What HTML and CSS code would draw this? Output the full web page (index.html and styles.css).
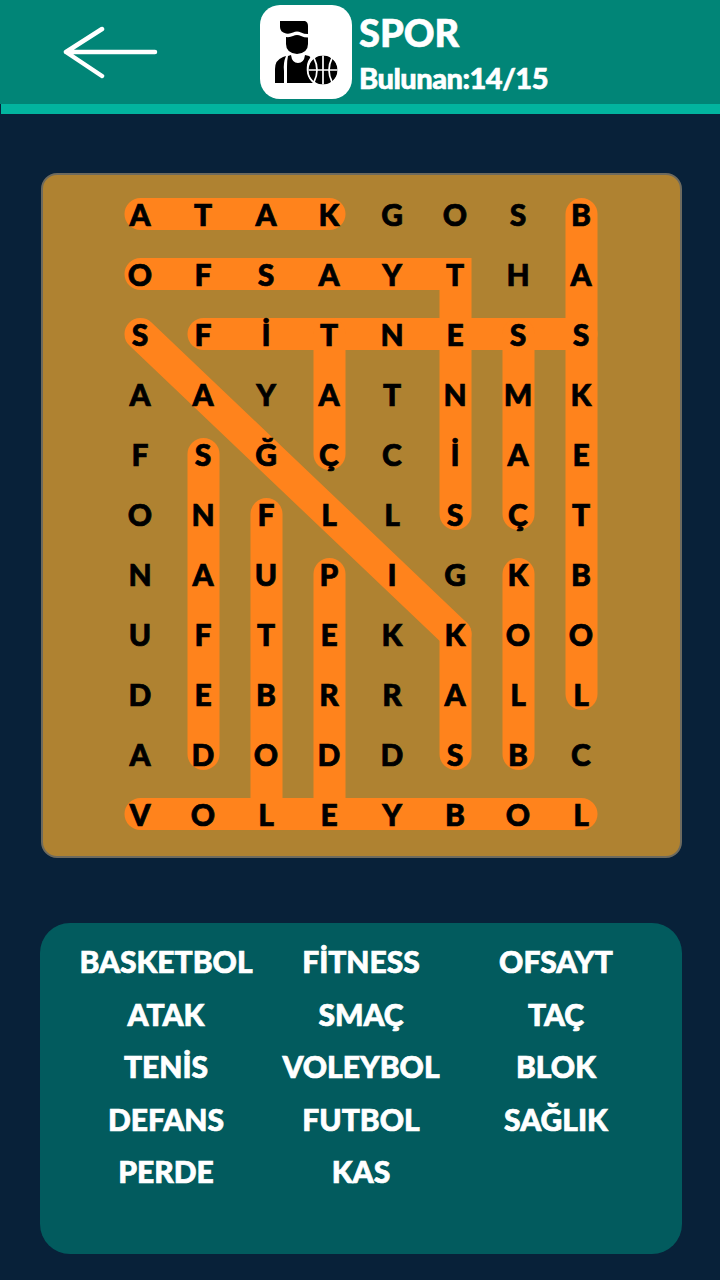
FILE: index.html
```html
<!DOCTYPE html>
<html lang="tr">
  <head>
    <meta charset="utf-8">
    <meta name="viewport" content="width=device-width, initial-scale=1.0">
    <title>SPOR</title>
    <link rel="stylesheet" href="styles.css">
  </head>

  <body>
    <!-- Top bar -->
    <header class="topbar">
      <svg class="back-arrow" width="96" height="54" viewBox="0 0 96 54">
        <path d="M4 26H93M40 3L4 26L40 50" fill="none" stroke="#fff" stroke-width="4.5" stroke-linecap="round" stroke-linejoin="round"/>
      </svg>
      <div class="category-tile">
        <svg width="92" height="94" viewBox="0 0 92 94">
          <path d="M20 16H45Q48 17 48 21V29Q44 29 41 27.500Q37 25.500 33 27.500Q30 29 26 28.500Q20 27 20 22Z" fill="#000"/>
          <path d="M26 32Q30 32.500 33 31Q37 29 41 31Q44 32.500 48 32.500V39Q48 48 37 49Q26 48 26 39Z" fill="#000"/>
          <path d="M23 52L26 51Q23 58 24 66V78H15V64Q15 55 23 52Z" fill="#000"/>
          <path d="M28 51L31 50Q32 58 38 58Q44 58 45 50L49 51Q51 52 50 53Q46 58 47 66Q48 73 53 78H27V62Q27 55 28 51Z" fill="#000"/>
          <circle cx="63" cy="65" r="14.500" fill="#000"/>
          <path d="M63 50.500V79.500M48.500 65H77.500M54 53Q60 65 54 77M72 53Q66 65 72 77" fill="none" stroke="#fff" stroke-width="1.700"/>
          <circle cx="63" cy="65" r="15.500" fill="none" stroke="#fff" stroke-width="1.500"/>
        </svg>
      </div>
      <div class="category-info">
        <div class="category-name">SPOR</div>
        <div class="found-count">Bulunan:14/15</div>
      </div>
    </header>
    <div class="topbar-strip"></div>

    <!-- Puzzle board -->
    <section class="board">
      <div class="letters">
        <svg class="marks" width="504" height="660" viewBox="0 0 504 660">
          <g fill="none" stroke="#ff831c" stroke-width="32" stroke-linecap="round" stroke-linejoin="miter">
            <path d="M31.500 30H220.500"/>
            <path d="M31.500 90H346.500V330"/>
            <path d="M94.500 150H472.500"/>
            <path d="M220.500 150V270"/>
            <path d="M472.500 30V510"/>
            <path d="M409.500 150V330"/>
            <path d="M94.500 270V570"/>
            <path d="M157.500 330V630"/>
            <path d="M220.500 390V630"/>
            <path d="M409.500 390V570"/>
            <path d="M346.500 450V570"/>
            <path d="M31.500 150L346.500 450"/>
            <path d="M31.500 630H472.500"/>
          </g>
        </svg>
        <span>A</span><span>T</span><span>A</span><span>K</span><span>G</span><span>O</span><span>S</span><span>B</span>
        <span>O</span><span>F</span><span>S</span><span>A</span><span>Y</span><span>T</span><span>H</span><span>A</span>
        <span>S</span><span>F</span><span>İ</span><span>T</span><span>N</span><span>E</span><span>S</span><span>S</span>
        <span>A</span><span>A</span><span>Y</span><span>A</span><span>T</span><span>N</span><span>M</span><span>K</span>
        <span>F</span><span>S</span><span>Ğ</span><span>Ç</span><span>C</span><span>İ</span><span>A</span><span>E</span>
        <span>O</span><span>N</span><span>F</span><span>L</span><span>L</span><span>S</span><span>Ç</span><span>T</span>
        <span>N</span><span>A</span><span>U</span><span>P</span><span>I</span><span>G</span><span>K</span><span>B</span>
        <span>U</span><span>F</span><span>T</span><span>E</span><span>K</span><span>K</span><span>O</span><span>O</span>
        <span>D</span><span>E</span><span>B</span><span>R</span><span>R</span><span>A</span><span>L</span><span>L</span>
        <span>A</span><span>D</span><span>O</span><span>D</span><span>D</span><span>S</span><span>B</span><span>C</span>
        <span>V</span><span>O</span><span>L</span><span>E</span><span>Y</span><span>B</span><span>O</span><span>L</span>
      </div>
    </section>

    <!-- Word list -->
    <section class="words">
      <span>BASKETBOL</span><span>FİTNESS</span><span>OFSAYT</span>
      <span>ATAK</span><span>SMAÇ</span><span>TAÇ</span>
      <span>TENİS</span><span>VOLEYBOL</span><span>BLOK</span>
      <span>DEFANS</span><span>FUTBOL</span><span>SAĞLIK</span>
      <span>PERDE</span><span>KAS</span>
    </section>
  </body>
</html>
```

FILE: styles.css
```css
html, body {
  margin: 0;
  background-color: #082139;
}

body {
  width: 720px;
  height: 1280px;
  overflow: hidden;
  font-family: 'Lato', sans-serif;
}

/* Top bar */
.topbar {
  display: flex;
  align-items: center;
  height: 104px;
  background-color: #018577;
  color: #fff;
}

.back-arrow {
  margin-left: 62px;
  margin-right: 102px;
  margin-top: 2px;
}

.category-tile {
  width: 92px;
  height: 94px;
  background-color: #fff;
  border-radius: 20px;
  margin-right: 7px;
}

.category-info {
  margin-top: 6px;
}

.category-name {
  font-size: 38px;
  font-weight: 900;
  line-height: 46px;
  -webkit-text-stroke: 0.6px #fff;
}

.found-count {
  font-size: 29px;
  font-weight: 900;
  line-height: 46px;
  letter-spacing: -0.5px;
  -webkit-text-stroke: 0.6px #fff;
}

.topbar-strip {
  height: 10px;
  margin-left: 1px;
  background-color: #02b49f;
}

/* Puzzle board */
.board {
  box-sizing: border-box;
  width: 641px;
  height: 685px;
  margin: 59px 0 0 41px;
  padding: 9px 0 0 65.5px;
  background-color: #af8231;
  border: 2px solid #6d6a5e;
  border-radius: 16px;
}

.letters {
  position: relative;
  display: grid;
  grid-template-columns: repeat(8, 63px);
  grid-template-rows: repeat(11, 60px);
  width: 504px;
  height: 660px;
  font-size: 30px;
  font-weight: 900;
  color: #000;
  -webkit-text-stroke: 0.7px #000;
}

.letters span {
  position: relative;
  display: flex;
  align-items: center;
  justify-content: center;
}

.marks {
  position: absolute;
  top: 0;
  left: 0;
}

/* Word list */
.words {
  box-sizing: border-box;
  display: grid;
  grid-template-columns: repeat(3, 195px);
  grid-auto-rows: 52.5px;
  justify-content: center;
  align-items: center;
  justify-items: center;
  width: 642px;
  height: 331px;
  margin: 65px 0 0 40px;
  padding-top: 12px;
  background-color: #025b5e;
  border-radius: 30px;
  font-size: 30px;
  font-weight: 900;
  color: #fff;
  -webkit-text-stroke: 0.7px #fff;
}
```
